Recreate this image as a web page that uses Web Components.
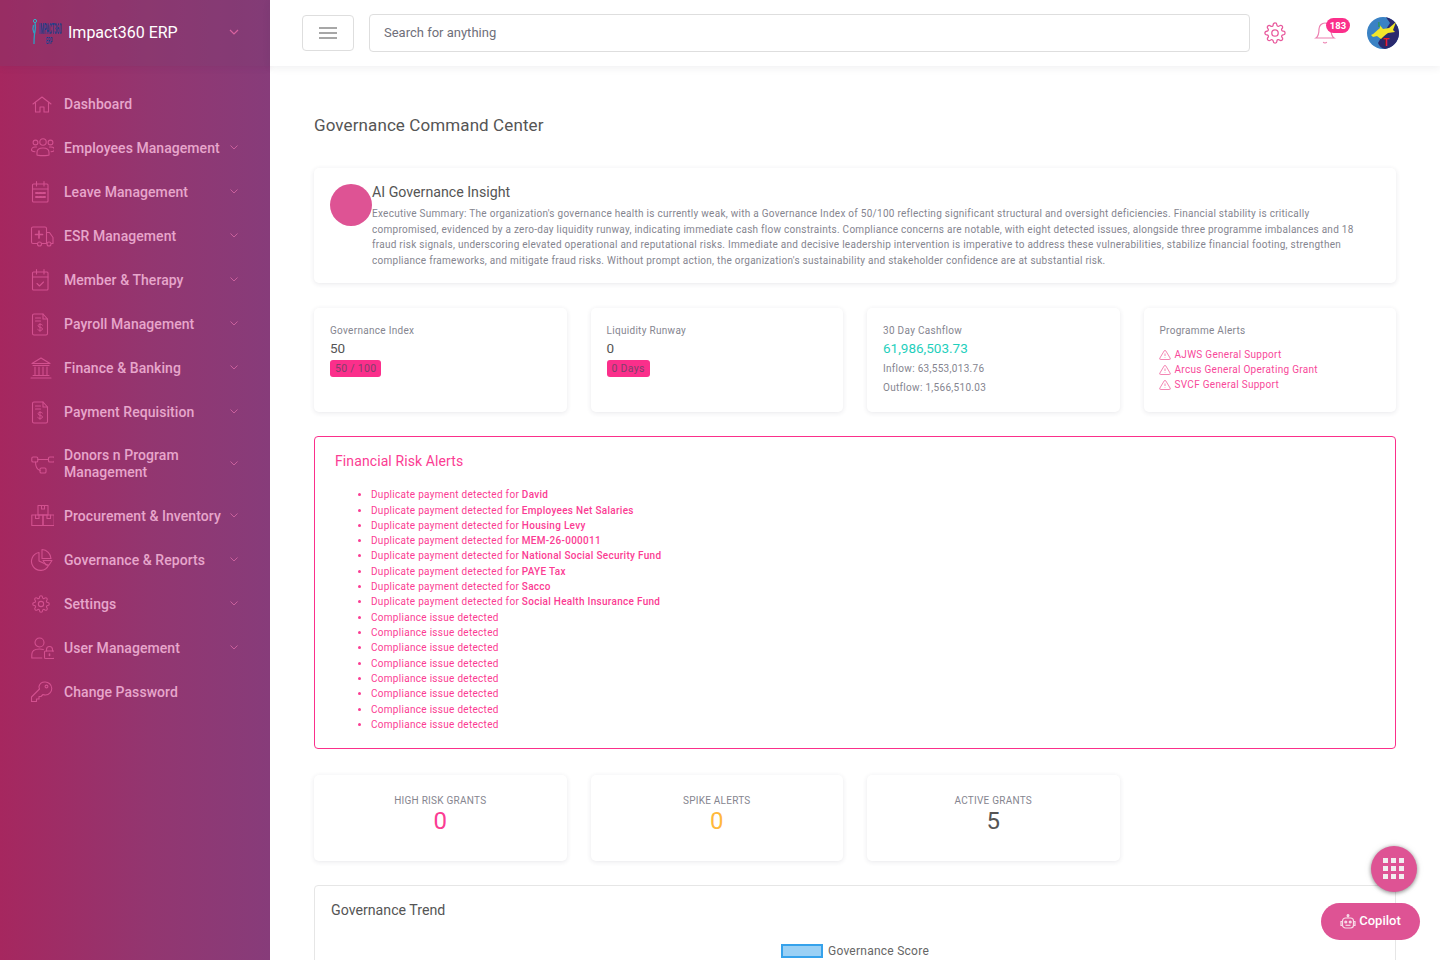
<!DOCTYPE html>
<html lang="en">
<head>
<meta charset="utf-8">
<title>Governance Command Center</title>
<style>
  html, body { margin: 0; height: 960px; overflow: hidden; background: #fff; }
  body { font-family: Roboto, "Liberation Sans", sans-serif; }
</style>
</head>
<body>
<app-shell>
  <app-sidebar slot="sidebar">
    <nav-item icon="home" label="Dashboard" plain></nav-item>
    <nav-item icon="users" label="Employees Management"></nav-item>
    <nav-item icon="calendar" label="Leave Management"></nav-item>
    <nav-item icon="ambulance" label="ESR Management"></nav-item>
    <nav-item icon="calcheck" label="Member &amp; Therapy"></nav-item>
    <nav-item icon="bill" label="Payroll Management"></nav-item>
    <nav-item icon="bank" label="Finance &amp; Banking"></nav-item>
    <nav-item icon="bill" label="Payment Requisition"></nav-item>
    <nav-item icon="nodes" label="Donors n Program Management" tall></nav-item>
    <nav-item icon="boxes" label="Procurement &amp; Inventory"></nav-item>
    <nav-item icon="pie" label="Governance &amp; Reports"></nav-item>
    <nav-item icon="gearSmall" label="Settings"></nav-item>
    <nav-item icon="userlock" label="User Management"></nav-item>
    <nav-item icon="key" label="Change Password" plain></nav-item>
  </app-sidebar>
  <app-topbar slot="topbar"></app-topbar>
  <governance-page></governance-page>
</app-shell>
<floating-actions></floating-actions>

<script>
const GEAR = '<circle cx="12" cy="12" r="3.500"/><path d="M19.400 15a1.650 1.650 0 0 0 .33 1.820l.06.06a2 2 0 0 1 0 2.830 2 2 0 0 1-2.830 0l-.06-.06a1.650 1.650 0 0 0-1.820-.33 1.650 1.650 0 0 0-1 1.510V21a2 2 0 0 1-2 2 2 2 0 0 1-2-2v-.09A1.650 1.650 0 0 0 9 19.400a1.650 1.650 0 0 0-1.820.33l-.06.06a2 2 0 0 1-2.830 0 2 2 0 0 1 0-2.830l.06-.06a1.650 1.650 0 0 0 .33-1.820 1.650 1.650 0 0 0-1.510-1H3a2 2 0 0 1-2-2 2 2 0 0 1 2-2h.09A1.650 1.650 0 0 0 4.600 9a1.650 1.650 0 0 0-.33-1.820l-.06-.06a2 2 0 0 1 0-2.830 2 2 0 0 1 2.830 0l.06.06a1.650 1.650 0 0 0 1.820.33H9a1.650 1.650 0 0 0 1-1.510V3a2 2 0 0 1 2-2 2 2 0 0 1 2 2v.09a1.650 1.650 0 0 0 1 1.510 1.650 1.650 0 0 0 1.820-.33l.06-.06a2 2 0 0 1 2.830 0 2 2 0 0 1 0 2.830l-.06.06a1.650 1.650 0 0 0-.33 1.820V9a1.650 1.650 0 0 0 1.510 1H21a2 2 0 0 1 2 2 2 2 0 0 1-2 2h-.09a1.650 1.650 0 0 0-1.510 1z"/>';

const ICONS = {
  home: '<path d="M3 12 12 5l9 7"/><path d="M5.500 10.500V20H10v-5h4v5h4.500v-9.500"/>',
  users: '<g transform="translate(1 0)"><circle cx="12" cy="6" r="3.200"/><circle cx="4.500" cy="6.500" r="2.400"/><circle cx="19.500" cy="6.500" r="2.400"/><path d="M6 19v-2.500c0-3 2.500-4.500 6-4.500s6 1.500 6 4.500V19c-1 .8-11 .8-12 0z"/><path d="M5.500 11H4c-2 0-3.500 1.200-3.500 3 0 .8 1.500 1.500 3.500 1.700"/><path d="M18.500 11H20c2 0 3.500 1.200 3.500 3 0 .8-1.500 1.500-3.500 1.700"/></g>',
  calendar: '<rect x="2.500" y="4" width="15.500" height="18" rx="1"/><path d="M2.500 9H18M6.500 1.500V6M14 1.500V6"/><path d="M6 13h2M9.500 13h2M13 13h2M6 17h2M9.500 17h2M13 17h2" stroke-width="2"/>',
  ambulance: '<path d="M7.500 19.500H3A1.500 1.500 0 0 1 1.500 18V4.500A1.500 1.500 0 0 1 3 3h12A1.500 1.500 0 0 1 16.500 4.500v15h-5"/><path d="M16.500 8.500h3l3.500 5v6h-1.500"/><circle cx="9.500" cy="20" r="2"/><circle cx="19" cy="20" r="2"/><path d="M9 7v7M5.500 10.500h7" stroke-width="1.700"/>',
  calcheck: '<rect x="2.500" y="4" width="15.500" height="18" rx="1"/><path d="M2.500 9H18M6.500 1.500V6M14 1.500V6"/><path d="m7 15.500 2.500 2.500 4-4"/>',
  bill: '<path d="M2.500 3.500A1.500 1.500 0 0 1 4 2h9l4.500 5v14.500A1.500 1.500 0 0 1 16 23H4a1.500 1.500 0 0 1-1.500-1.500z"/><path d="M13 2v5h4.500M5.500 6h5M5.500 9h5"/><path d="M12.500 13c-.5-1-4.500-1.300-4.500.8 0 2 4.500 1 4.500 3.200 0 2-4 1.800-4.800.6M10 11.500v8" stroke-width=".950"/>',
  bank: '<path d="M11 2 2 7.500h18z"/><path d="M3 9.500h16M5 11v7.500M9 11v7.500M13 11v7.500M17 11v7.500"/><path d="M3 19.500h16M1 22h20"/>',
  nodes: '<g transform="translate(1 0)"><rect x=".800" y="5" width="6" height="5" rx="1.300"/><rect x="17.500" y="5" width="6" height="5" rx="1.300"/><rect x="9" y="16" width="6" height="5" rx="1.300"/><path d="M6.800 7.500h10.700M4.500 10c0 4 1.500 7.500 4.500 8.500"/></g>',
  boxes: '<g transform="translate(1 0)"><rect x="7" y="1.500" width="10" height="9.500"/><rect x=".800" y="11" width="11.200" height="10.500"/><rect x="12" y="11" width="11.200" height="10.500"/><path d="M10.500 1.500V5h3V1.500M4.500 11v3.500H8V11M16 11v3.500h3.500V11"/></g>',
  pie: '<path d="M9 4.500a9 9 0 1 0 9.500 13L9 13z"/><path d="M12 1.500a9.500 9.500 0 0 1 9 9h-9z"/><path d="M13 12.500h9l-3 4.500h-3z"/>',
  gearSmall: `<g transform="translate(2 3) scale(.75)" stroke-width="1.450">${GEAR}</g>`,
  userlock: '<g transform="translate(1 0)"><circle cx="8.500" cy="6.500" r="4.500"/><path d="M.800 22v-3.500c0-3.500 3-5.500 7.700-5.500 1.500 0 2.800.2 3.800.6M.800 22h10"/><rect x="13.500" y="15" width="10" height="7.500" rx="1"/><path d="M15.500 15v-1.500a3 3 0 0 1 6 0V15"/><path d="M18.500 18v1.500" stroke-width="1.600"/></g>',
  key: '<path d="M15 2a6.500 6.500 0 0 1 .5 13c-.9 0-1.800-.2-2.500-.5l-2 2H9V19H6.500v2.500H1.500V17l8-8c-.3-.7-.5-1.600-.5-2.500A6 6 0 0 1 15 2z"/><circle cx="16.500" cy="6.500" r="1.400"/>'
};

function iconSvg(name, size, colour) {
  return `<svg width="${size}" height="${size}" viewBox="0 0 24 24" fill="none" stroke="${colour}" stroke-width="1.100" stroke-linecap="round" stroke-linejoin="round">${ICONS[name]}</svg>`;
}

class AppShell extends HTMLElement {
  constructor() {
    super();
    this.attachShadow({ mode: 'open' });
    this.shadowRoot.innerHTML = `
      <style>
        :host { display: grid; grid-template-columns: 270px 1fr; grid-template-rows: 66px 1fr; width: 1440px; height: 960px; overflow: hidden; }
        .side { grid-row: 1 / 3; display: block; min-height: 0; }
        .main { min-height: 0; overflow: hidden; }
      </style>
      <div class="side"><slot name="sidebar"></slot></div>
      <div class="top"><slot name="topbar"></slot></div>
      <div class="main"><slot></slot></div>
    `;
  }
}

class AppSidebar extends HTMLElement {
  constructor() {
    super();
    this.attachShadow({ mode: 'open' });
    this.shadowRoot.innerHTML = `
      <style>
        :host { display: block; height: 960px; background: linear-gradient(90deg, #a6275f 0%, #933670 55%, #873c7a 100%); }
        .brand { height: 66px; display: flex; align-items: center; padding: 0 30px 2px; box-sizing: border-box;
          background: rgba(120, 60, 110, .28); box-shadow: 0 2px 6px rgba(90, 30, 80, .12); }
        .logo { width: 32px; height: 32px; flex: none; margin-right: 6px; }
        .name { flex: 1; color: #fff; font-size: 16px; }
        .chev { flex: none; margin-right: 1px; }
        nav { display: flex; flex-direction: column; padding-top: 16px; }
      </style>
      <div class="brand">
        <svg class="logo" viewBox="0 0 32 32">
          <circle cx="5" cy="5" r="1.600" fill="none" stroke="#35b3c8" stroke-width="1"/>
          <path d="M5 7c1 4 .5 7-.5 11-.3 3-.5 6-.5 10M3.500 9c-1 3-.5 6 .5 8" fill="none" stroke="#2f9fc2" stroke-width="1.300"/>
          <text transform="scale(1 3.300)" x="9" y="5.450" font-family="Roboto" font-size="4.200" font-weight="700" fill="#1d3f8c">IMPACT360</text>
          <text transform="scale(1 2.400)" x="16" y="11.670" font-family="Roboto" font-size="3.500" font-weight="700" fill="#1d3f8c">ERP</text>
        </svg>
        <span class="name">Impact360 ERP</span>
        <svg class="chev" width="10" height="6" viewBox="0 0 10 6" fill="none" stroke="#d8639f" stroke-width="1.200"><path d="m1 1 4 4 4-4"/></svg>
      </div>
      <nav><slot></slot></nav>
    `;
  }
}

class NavItem extends HTMLElement {
  constructor() {
    super();
    this.attachShadow({ mode: 'open' });
  }

  connectedCallback() {
    const chevron = this.hasAttribute('plain') ? '' :
      '<svg class="chev" width="8" height="5" viewBox="0 0 8 5" fill="none" stroke="#c9609c" stroke-width="1"><path d="m.5.5 3.500 3.500 3.500-3.500"/></svg>';
    this.shadowRoot.innerHTML = `
      <style>
        :host { display: block; }
        .row { display: flex; align-items: center; height: ${this.hasAttribute('tall') ? 60 : 44}px; padding-left: 30px; box-sizing: border-box; }
        .icon { width: 24px; height: 24px; flex: none; margin-right: 10px; }
        .label { width: 158px; color: #e7a6cb; font-size: 14px; line-height: 17px; letter-spacing: .06px; font-weight: 500; }
        .chev { margin-left: 8px; margin-top: -1px; flex: none; }
      </style>
      <div class="row">
        <span class="icon">${iconSvg(this.getAttribute('icon'), 24, '#d2518f')}</span>
        <span class="label">${this.getAttribute('label').replace('&', '&amp;')}</span>
        ${chevron}
      </div>
    `;
  }
}

class AppTopbar extends HTMLElement {
  constructor() {
    super();
    this.attachShadow({ mode: 'open' });
    this.shadowRoot.innerHTML = `
      <style>
        :host { display: flex; align-items: center; height: 66px; padding-left: 32px; box-sizing: border-box; background: #fff; box-shadow: 0 2px 8px rgba(40, 40, 60, .07); position: relative; z-index: 2; }
        button { width: 52px; height: 36px; flex: none; border: 1px solid #dedede; border-radius: 4px; background: #fff; display: flex; align-items: center; justify-content: center; padding: 0; }
        .search { width: 881px; height: 38px; flex: none; margin-left: 15px; border: 1px solid #dedede; border-radius: 4px; box-sizing: border-box; padding: 0 0 2px 14px; display: flex; align-items: center; font-size: 13px; color: #6f6f7a; }
        .gear { margin-left: 14px; flex: none; display: flex; }
        .bell { margin-left: 27px; width: 24px; height: 24px; flex: none; position: relative; }
        .badge { position: absolute; left: 13px; top: -3px; width: 24px; height: 15px; border-radius: 8px; background: #fb2f8b; color: #fff; font-size: 9.500px; font-weight: 700; line-height: 15px; text-align: center; }
        .avatar { margin-left: 30px; flex: none; width: 32px; height: 32px; }
      </style>
      <button aria-label="Menu">
        <svg width="18" height="12" viewBox="0 0 18 12" stroke="#8a8a8a" stroke-width="1.500"><path d="M0 1h18M0 6h18M0 11h18"/></svg>
      </button>
      <div class="search">Search for anything</div>
      <span class="gear"><svg width="22" height="22" viewBox="0 0 24 24" fill="none" stroke="#e85a9d" stroke-width="1.400" stroke-linejoin="round">${GEAR}</svg></span>
      <span class="bell">
        <svg width="24" height="24" viewBox="0 0 24 24" fill="none" stroke="#ec7fb0" stroke-width="1.200"><path d="M18 8A6 6 0 0 0 6 8c0 7-3 9-3 9h18s-3-2-3-9"/><path d="M13.730 21a2 2 0 0 1-3.460 0"/></svg>
        <span class="badge">183</span>
      </span>
      <svg class="avatar" viewBox="0 0 32 32">
        <circle cx="16" cy="16" r="16" fill="#3a82c4"/>
        <path d="M19 .3A16 16 0 0 1 18 31.900 9 9 0 0 1 11 26l7-12 5-8z" fill="#2a2a6e"/>
        <path d="M4 18c3-1 5-4 9-7l-1-4 4 5 6-1 7-6-3 8 2 2-7 1c-3 2-5 4-7 6l-4-3-4 1z" fill="#f2e62a"/>
        <text x="11" y="10" font-family="Roboto" font-size="8" font-weight="700" fill="#1f9a58">I</text>
        <text x="16" y="29" font-family="Roboto" font-size="10" font-weight="700" fill="#ee1c25">T</text>
      </svg>
    `;
  }
}

class InfoCard extends HTMLElement {
  constructor() {
    super();
    this.attachShadow({ mode: 'open' });
    this.shadowRoot.innerHTML = `
      <style>
        :host { display: block; background: #fff; border-radius: 5px; box-shadow: 0 1px 5px rgba(50, 50, 70, .11); box-sizing: border-box; padding: 16px; }
      </style>
      <slot></slot>
    `;
  }
}

class KpiCard extends HTMLElement {
  constructor() {
    super();
    this.attachShadow({ mode: 'open' });
    this.shadowRoot.innerHTML = `
      <style>
        :host { display: block; height: 104px; background: #fff; border-radius: 5px; box-shadow: 0 1px 5px rgba(50, 50, 70, .11); box-sizing: border-box; padding: 16px 16px 0; }
        .title { font-size: 10px; line-height: 14px; letter-spacing: .3px; color: #85858f; margin-bottom: 1px; }
      </style>
      <div class="title">${this.getAttribute('heading')}</div>
      <slot></slot>
    `;
  }
}

class StatCard extends HTMLElement {
  constructor() {
    super();
    this.attachShadow({ mode: 'open' });
    const colour = this.getAttribute('colour');
    this.shadowRoot.innerHTML = `
      <style>
        :host { display: block; height: 86px; background: #fff; border-radius: 5px; box-shadow: 0 1px 5px rgba(50, 50, 70, .11); text-align: center; box-sizing: border-box; padding-top: 19px; }
        .label { font-size: 10px; line-height: 14px; letter-spacing: .25px; color: #85858f; margin-bottom: -1px; }
        .value { font-size: 24px; line-height: 28px; color: ${colour}; }
      </style>
      <div class="label">${this.getAttribute('label')}</div>
      <div class="value">${this.getAttribute('value')}</div>
    `;
  }
}

class GovernancePage extends HTMLElement {
  constructor() {
    super();
    this.attachShadow({ mode: 'open' });
    const duplicates = ['David', 'Employees Net Salaries', 'Housing Levy', 'MEM-26-000011', 'National Social Security Fund', 'PAYE Tax', 'Sacco', 'Social Health Insurance Fund'];
    const items = duplicates.map((name) => `<li>Duplicate payment detected for <b>${name}</b></li>`).join('')
      + '<li>Compliance issue detected</li>'.repeat(8);
    const warn = '<svg width="12" height="12" viewBox="0 0 24 24" fill="none" stroke="#f0669f" stroke-width="1.600" stroke-linejoin="round"><path d="M10.290 3.860 1.820 18a2 2 0 0 0 1.710 3h16.940a2 2 0 0 0 1.710-3L13.710 3.860a2 2 0 0 0-3.420 0z"/><path d="M12 9v5M12 17v1"/></svg>';
    this.shadowRoot.innerHTML = `
      <style>
        :host { display: block; padding: 48px 44px 0; color: #555; height: 894px; box-sizing: border-box; }
        h1 { margin: 0 0 32px; font-size: 17px; line-height: 22px; font-weight: 400; color: #555; letter-spacing: .1px; }
        .insight { height: 115px; margin-bottom: 25px; }
        .insight-row { display: flex; }
        .dot { width: 42px; height: 42px; flex: none; border-radius: 50%; background: #de5394; }
        .insight-row h2 { margin: 0 0 5.300px; font-size: 14.200px; line-height: 17px; font-weight: 400; color: #555; }
        .insight-row p { margin: 0; max-width: 995px; font-size: 10px; line-height: 15.400px; color: #85858f; letter-spacing: .27px; }
        .grid { display: grid; grid-template-columns: repeat(4, 1fr); gap: 24px; }
        .num { font-size: 13.500px; line-height: 18px; color: #555; }
        .pill { display: block; width: fit-content; height: 17px; margin-top: 3px; line-height: 17px; padding: 0 5px; border-radius: 3px; background: #fb2f8b; color: #80406a; font-size: 10.500px; letter-spacing: .3px; }
        .cash { font-size: 13.500px; line-height: 18px; color: #1fcfbc; margin-bottom: 2px; }
        .sub { font-size: 10px; line-height: 19px; color: #85858f; letter-spacing: .3px; }
        .prog { list-style: none; margin: 0; padding: 8px 0 0; }
        .prog li { display: flex; align-items: center; gap: 3px; font-size: 10px; line-height: 15.200px; letter-spacing: .3px; color: #f8499a; }
        .prog svg { margin-left: -1px; margin-right: 1px; }
        .alert { margin-top: 24px; height: 313px; border: 1px solid #fb2f8b; border-radius: 4px; box-sizing: border-box; padding: 15px 20px 0; }
        .alert h3 { margin: 0 0 17.200px; font-size: 14px; line-height: 18px; letter-spacing: .1px; font-weight: 400; color: #fb3c93; }
        .alert ul { margin: 0; padding-left: 36px; color: #fb3c93; }
        .alert li { font-size: 10px; line-height: 15.320px; letter-spacing: .29px; }
        .alert b { font-weight: 500; }
        .stats { margin-top: 26px; }
        .trend { margin-top: 24px; height: 200px; border: 1px solid #e6e6e6; border-radius: 4px; box-sizing: border-box; padding: 15px 16px; }
        .trend h3 { margin: 0; font-size: 14.200px; line-height: 18px; font-weight: 400; color: #555; }
        .legend { display: flex; align-items: center; justify-content: center; gap: 5px; margin-top: 25px; font-size: 12px; line-height: 14px; letter-spacing: .25px; color: #666; }
        .swatch { width: 42px; height: 14px; box-sizing: border-box; background: #9ad0f5; border: 2px solid #36a2eb; }
      </style>
      <h1>Governance Command Center</h1>
      <info-card class="insight">
        <div class="insight-row">
          <span class="dot"></span>
          <div>
            <h2>AI Governance Insight</h2>
            <p>Executive Summary: The organization's governance health is currently weak, with a Governance Index of 50/100 reflecting significant structural and oversight deficiencies. Financial stability is critically compromised, evidenced by a zero-day liquidity runway, indicating immediate cash flow constraints. Compliance concerns are notable, with eight detected issues, alongside three programme imbalances and 18 fraud risk signals, underscoring elevated operational and reputational risks. Immediate and decisive leadership intervention is imperative to address these vulnerabilities, stabilize financial footing, strengthen compliance frameworks, and mitigate fraud risks. Without prompt action, the organization's sustainability and stakeholder confidence are at substantial risk.</p>
          </div>
        </div>
      </info-card>
      <div class="grid">
        <kpi-card heading="Governance Index"><div class="num">50</div><span class="pill">50 / 100</span></kpi-card>
        <kpi-card heading="Liquidity Runway"><div class="num">0</div><span class="pill">0 Days</span></kpi-card>
        <kpi-card heading="30 Day Cashflow"><div class="cash">61,986,503.73</div><div class="sub">Inflow: 63,553,013.76</div><div class="sub">Outflow: 1,566,510.03</div></kpi-card>
        <kpi-card heading="Programme Alerts"><ul class="prog"><li>${warn}AJWS General Support</li><li>${warn}Arcus General Operating Grant</li><li>${warn}SVCF General Support</li></ul></kpi-card>
      </div>
      <section class="alert">
        <h3>Financial Risk Alerts</h3>
        <ul>${items}</ul>
      </section>
      <div class="grid stats">
        <stat-card label="HIGH RISK GRANTS" value="0" colour="#fb3c93"></stat-card>
        <stat-card label="SPIKE ALERTS" value="0" colour="#ffb93b"></stat-card>
        <stat-card label="ACTIVE GRANTS" value="5" colour="#555"></stat-card>
      </div>
      <section class="trend">
        <h3>Governance Trend</h3>
        <div class="legend"><span class="swatch"></span>Governance Score</div>
      </section>
    `;
  }
}

class FloatingActions extends HTMLElement {
  constructor() {
    super();
    this.attachShadow({ mode: 'open' });
    let dots = '';
    for (let y = 0; y < 3; y++) {
      for (let x = 0; x < 3; x++) {
        dots += `<rect x="${x * 8}" y="${y * 8}" width="5" height="5" fill="#f1eef0"/>`;
      }
    }
    this.shadowRoot.innerHTML = `
      <style>
        :host { display: block; }
        .apps { position: fixed; left: 1371px; top: 846px; width: 46px; height: 46px; border-radius: 50%; background: #de5394; display: flex; align-items: center; justify-content: center; box-shadow: 0 1px 4px rgba(0, 0, 0, .45), 0 0 8px rgba(0, 0, 0, .08); }
        .apps svg { margin: 0 1px 1px 0; }
        .copilot { position: fixed; left: 1321px; top: 903px; width: 99px; height: 37px; border-radius: 19px; background: #de5394; color: #fff; display: flex; align-items: center; justify-content: center; gap: 3px; font-size: 13px; font-weight: 500; box-sizing: border-box; padding-bottom: 2px; }
        .copilot svg { margin-top: 2px; }
      </style>
      <div class="apps"><svg width="21" height="21" viewBox="0 0 21 21">${dots}</svg></div>
      <div class="copilot">
        <svg width="16" height="16" viewBox="0 0 16 16" fill="none" stroke="#f7dbe8" stroke-width="1.200"><path d="M8 1v2.500"/><circle cx="8" cy="1.500" r=".9" fill="#f7dbe8"/><rect x="2.500" y="4" width="11" height="10" rx="3"/><path d="M2.500 7.500H1v4h1.500M13.500 7.500H15v4h-1.500"/><circle cx="5.800" cy="8" r="1" fill="#f7dbe8"/><circle cx="10.200" cy="8" r="1" fill="#f7dbe8"/><path d="M5.500 11.300h5"/></svg>
        Copilot
      </div>
    `;
  }
}

customElements.define('app-shell', AppShell);
customElements.define('app-sidebar', AppSidebar);
customElements.define('nav-item', NavItem);
customElements.define('app-topbar', AppTopbar);
customElements.define('info-card', InfoCard);
customElements.define('kpi-card', KpiCard);
customElements.define('stat-card', StatCard);
customElements.define('governance-page', GovernancePage);
customElements.define('floating-actions', FloatingActions);
</script>
</body>
</html>
